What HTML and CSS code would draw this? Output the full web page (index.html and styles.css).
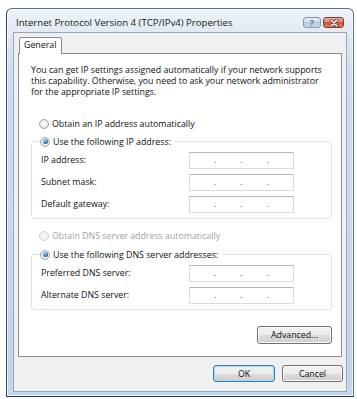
FILE: index.html
```html
<!DOCTYPE html>
<html lang="en">

<head>
    <meta charset="UTF-8">
    <meta name="viewport" content="width=device-width, initial-scale=1.0">
    <title>Internet Protocol Version 4 (TCP/IPv4) Properties</title>
    <link rel="stylesheet" href="styles.css">
</head>

<body>
    <div class="window">
        <div class="titlebar">
            <span class="title">Internet Protocol Version 4 (TCP/IPv4) Properties</span>
            <div class="caption-buttons">
                <span class="cap-btn help">?</span>
                <span class="cap-btn close">
                    <svg width="10" height="8" viewBox="0 0 10 8">
                        <path d="M2 1 L8 7 M8 1 L2 7" stroke="#6b2216" stroke-width="3" stroke-linecap="round" />
                        <path d="M2 1 L8 7 M8 1 L2 7" stroke="#ffffff" stroke-width="1.6" stroke-linecap="round" />
                    </svg>
                </span>
            </div>
        </div>

        <div class="client">
            <div class="tabs">
                <span class="tab">General</span>
            </div>
            <div class="panel">
                <p class="intro">You can get IP settings assigned automatically if your network supports<br>this capability. Otherwise, you need to ask your network administrator<br>for the appropriate IP settings.</p>

                <div class="option ip-auto"><span class="radio"></span>Obtain an IP address automatically</div>
                <fieldset class="group ip-group">
                    <legend><span class="option"><span class="radio on"></span>Use the following IP address:</span></legend>
                    <div class="field">
                        <span class="label">IP address:</span>
                        <span class="ip"><span class="seg"></span><span class="dot">.</span><span class="seg"></span><span class="dot">.</span><span class="seg"></span><span class="dot">.</span><span class="seg"></span></span>
                    </div>
                    <div class="field">
                        <span class="label">Subnet mask:</span>
                        <span class="ip"><span class="seg"></span><span class="dot">.</span><span class="seg"></span><span class="dot">.</span><span class="seg"></span><span class="dot">.</span><span class="seg"></span></span>
                    </div>
                    <div class="field">
                        <span class="label">Default gateway:</span>
                        <span class="ip"><span class="seg"></span><span class="dot">.</span><span class="seg"></span><span class="dot">.</span><span class="seg"></span><span class="dot">.</span><span class="seg"></span></span>
                    </div>
                </fieldset>

                <div class="option dns-auto disabled"><span class="radio"></span>Obtain DNS server address automatically</div>
                <fieldset class="group dns-group">
                    <legend><span class="option"><span class="radio on"></span>Use the following DNS server addresses:</span></legend>
                    <div class="field">
                        <span class="label">Preferred DNS server:</span>
                        <span class="ip"><span class="seg"></span><span class="dot">.</span><span class="seg"></span><span class="dot">.</span><span class="seg"></span><span class="dot">.</span><span class="seg"></span></span>
                    </div>
                    <div class="field">
                        <span class="label">Alternate DNS server:</span>
                        <span class="ip"><span class="seg"></span><span class="dot">.</span><span class="seg"></span><span class="dot">.</span><span class="seg"></span><span class="dot">.</span><span class="seg"></span></span>
                    </div>
                </fieldset>

                <div class="advanced-row">
                    <span class="btn advanced">Advanced...</span>
                </div>
            </div>

            <div class="dialog-buttons">
                <span class="btn ok">OK</span>
                <span class="btn cancel">Cancel</span>
            </div>
        </div>
    </div>
</body>

</html>
```

FILE: styles.css
```css
body {
    margin: 0;
    background: #ffffff;
    font-family: "Open Sans", "Noto Sans", sans-serif;
    font-size: 8.8px;
    color: #111;
}

.window {
    box-sizing: border-box;
    width: 348px;
    height: 389px;
    margin: 8px 0 0 6px;
    padding: 0 6px 4px;
    border: 1px solid #5d6f85;
    border-bottom-color: #2e3b4b;
    border-left-color: #3a4a5d;
    border-radius: 6px 6px 0 0;
    background: linear-gradient(#eef3f8 0, #e3eaf3 22px, #cddcee 60px, #c3d5ea 100%);
    box-shadow: inset 0 0 0 1px rgba(255, 255, 255, 0.7);
    display: flex;
    flex-direction: column;
}

.titlebar {
    box-sizing: border-box;
    height: 23px;
    padding: 8px 3px 0;
    display: flex;
    justify-content: space-between;
    align-items: flex-start;
}

.title {
    font-size: 9.6px;
    line-height: 12px;
    color: #1a1a1a;
}

.caption-buttons {
    display: flex;
    gap: 2px;
}

.cap-btn {
    box-sizing: border-box;
    height: 11px;
    border: 1px solid #8394aa;
    border-radius: 3px;
    display: flex;
    align-items: center;
    justify-content: center;
}

.help {
    width: 18px;
    background: linear-gradient(#e6edf5, #cbd8e7 50%, #b8cadf 50%, #cddcec);
    color: #6a7b90;
    font-weight: bold;
    font-size: 9px;
    line-height: 9px;
}

.close {
    width: 21px;
    border-color: #83392c;
    background: linear-gradient(#eab0a5, #d88a78 50%, #c5533e 50%, #da8468);
}

.client {
    flex: 1;
    background: #f0f0f0;
    border: 1px solid #95a8be;
    padding: 4px 4px 0;
    display: flex;
    flex-direction: column;
}

.tabs {
    display: flex;
    padding-left: 1px;
}

.tab {
    position: relative;
    z-index: 1;
    box-sizing: border-box;
    width: 43px;
    height: 17px;
    margin-bottom: -1px;
    padding-left: 4px;
    border: 1px solid #898c95;
    border-bottom: none;
    border-radius: 2px 2px 0 0;
    background: #ffffff;
    line-height: 15px;
}

.panel {
    box-sizing: border-box;
    height: 304px;
    padding: 11px 9px 0 12px;
    border: 1px solid #898c95;
    background: #ffffff;
}

.intro {
    margin: 0;
    line-height: 11.2px;
    white-space: nowrap;
}

.option {
    display: flex;
    align-items: center;
    gap: 3px;
    height: 12px;
    line-height: 12px;
    white-space: nowrap;
}

.ip-auto {
    margin: 19px 0 0 8px;
}

.dns-auto {
    margin: 11px 0 0 8px;
}

.option.disabled {
    color: #a3a3a3;
}

.radio {
    flex: none;
    box-sizing: border-box;
    width: 10px;
    height: 10px;
    border: 1px solid #a2a6ab;
    border-radius: 50%;
    background: radial-gradient(circle at 50% 40%, #ffffff, #dcdde0);
    display: flex;
    align-items: center;
    justify-content: center;
}

.radio.on::after {
    content: "";
    width: 5px;
    height: 5px;
    border-radius: 50%;
    background: radial-gradient(circle at 40% 35%, #a6dbf8, #2a6fb0 60%, #174d85);
}

.disabled .radio {
    border-color: #cdced1;
    background: #f3f3f3;
}

.group {
    min-width: 0;
    margin: 0;
    padding: 4px 37px 5px 9px;
    border: 1px solid #d9e2e8;
    border-radius: 3px;
}

.ip-group {
    margin-top: 6px;
}

.dns-group {
    margin-top: 7px;
}

.group legend {
    margin-left: -1px;
    padding: 0 4px 0 0;
    line-height: 12px;
}

.field {
    display: flex;
    align-items: center;
    height: 17px;
}

.field + .field {
    margin-top: 5px;
}

.label {
    flex: 1;
}

.ip {
    box-sizing: border-box;
    width: 105px;
    height: 17px;
    border: 1px solid #d8dbe0;
    border-top-color: #b5b7bd;
    background: #ffffff;
    display: flex;
    align-items: center;
}

.ip .seg {
    flex: 1;
}

.ip .dot {
    color: #555;
    line-height: 10px;
}

.advanced-row {
    display: flex;
    justify-content: flex-end;
    margin-top: 16px;
}

.btn {
    box-sizing: border-box;
    height: 18px;
    border: 1px solid #707070;
    border-radius: 3px;
    background: linear-gradient(#f2f2f2, #ebebeb 50%, #dddddd 50%, #cfcfcf);
    box-shadow: inset 0 0 0 1px #fbfbfb;
    display: flex;
    align-items: center;
    justify-content: center;
}

.advanced {
    width: 75px;
}

.dialog-buttons {
    display: flex;
    justify-content: flex-end;
    gap: 7px;
    margin: 8px -1px 0 0;
}

.ok {
    width: 62px;
    height: 17px;
    border-color: #3c7fb1;
    box-shadow: inset 0 0 0 1px #9fdaf7;
}

.cancel {
    width: 61px;
    height: 17px;
}
```
